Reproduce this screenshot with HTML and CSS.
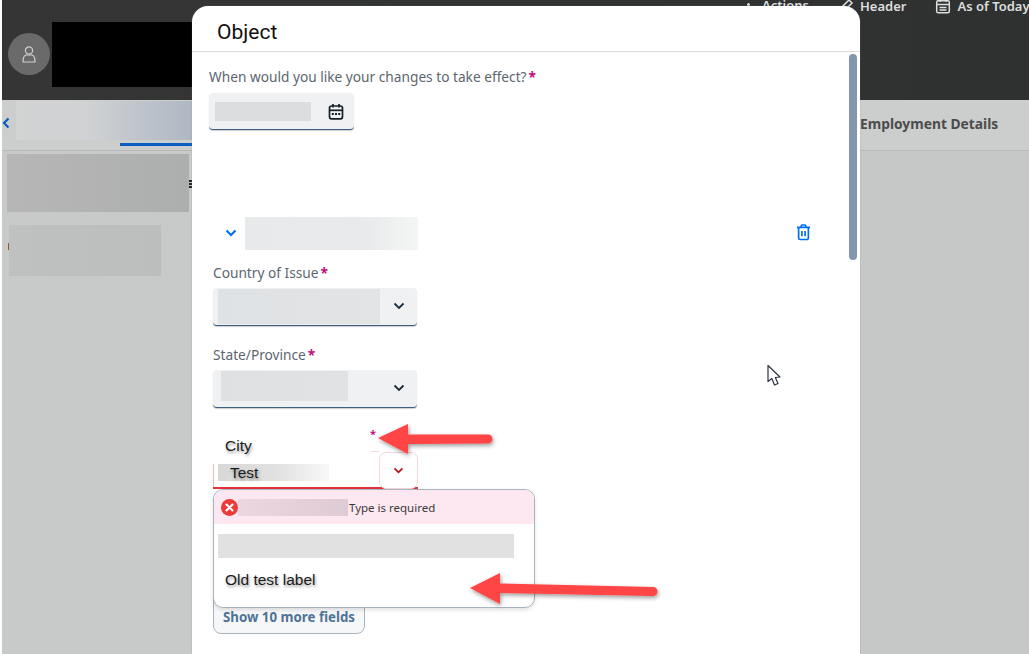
FILE: index.html
```html
<!DOCTYPE html>
<html lang="en">
<head>
<meta charset="utf-8">
<title>Object</title>
<link rel="stylesheet" href="styles.css">
</head>
<body>
<div class="page">
  <header class="shell">
    <div class="shell-actions">
      <span class="shell-action action-first"><span class="dot"></span>Actions</span>
      <span class="shell-action">
        <svg class="ico" viewBox="0 0 16 16"><path d="M2 14l1-4 8-8 3 3-8 8z" fill="none" stroke="currentColor" stroke-width="1.5"/></svg>Header</span>
      <span class="shell-action">
        <svg class="ico" viewBox="0 0 16 16"><rect x="1.7" y="2.7" width="12.6" height="12" rx="1.5" fill="none" stroke="currentColor" stroke-width="1.5"/><path d="M1.7 6.5h12.6M5 1v3M11 1v3M4.5 9.500h7M4.500 12h7" stroke="currentColor" stroke-width="1.500" fill="none"/></svg>As of Today</span>
    </div>
    <div class="identity">
      <div class="avatar">
        <svg viewBox="0 0 16 18" class="avatar-ico"><circle cx="8" cy="5" r="3.600" fill="none" stroke="currentColor" stroke-width="1.200"/><path d="M2 16.500c0-5 1.500-7 3.500-7h5c2 0 3.500 2 3.500 7z" fill="none" stroke="currentColor" stroke-width="1.200" stroke-linejoin="round"/></svg>
      </div>
      <div class="redacted"></div>
    </div>
  </header>
  <nav class="tabs">
    <span class="back">
      <svg viewBox="0 0 8 12" class="back-ico"><path d="M6.500 1.500L2 6l4.500 4.500" fill="none" stroke="currentColor" stroke-width="2.200"/></svg>
    </span>
    <span class="tab-blur"></span>
    <span class="tab-active"></span>
    <span class="tab-label">Employment Details</span>
  </nav>
  <main class="content">
    <div class="side-a"></div>
    <div class="side-b"></div>
  </main>
  <span class="menu-dots"></span>
  <span class="orange-mark"></span>

  <section class="dialog">
    <h1 class="dialog-title">Object</h1>
    <div class="dialog-body">
      <div class="thumb"></div>
      <div class="date-block">
        <div class="label">When would you like your changes to take effect?<span class="req">*</span></div>
        <div class="input date-input">
          <span class="blur date-blur"></span>
          <svg class="cal" viewBox="0 0 16 17"><rect x="1.500" y="3" width="13" height="12.800" rx="2" fill="none" stroke="#16202b" stroke-width="1.700"/><path d="M1.500 7.300h13" stroke="#16202b" stroke-width="1.700"/><path d="M5 1v3.500M11 1v3.500" stroke="#16202b" stroke-width="1.700"/><path d="M3.800 11h2M7 11h2M10.200 11h2" stroke="#16202b" stroke-width="1.800"/></svg>
        </div>
      </div>
      <div class="section-row">
        <svg class="chev-blue" viewBox="0 0 12 8"><path d="M1.500 1.500L6 6l4.500-4.500" fill="none" stroke="currentColor" stroke-width="2.200"/></svg>
        <span class="blur section-blur"></span>
        <svg class="trash" viewBox="0 0 16 18"><path d="M1 4h14M5.500 4V2.500a1 1 0 0 1 1-1h3a1 1 0 0 1 1 1V4M2.800 4v11.500a1.500 1.500 0 0 0 1.500 1.500h7.400a1.500 1.500 0 0 0 1.500-1.500V4M6.300 8v5.500M9.700 8v5.500" fill="none" stroke="currentColor" stroke-width="1.800"/></svg>
      </div>
      <div class="field">
        <div class="label">Country of Issue<span class="req">*</span></div>
        <div class="input select country">
          <span class="blur country-blur"></span>
          <svg class="chev" viewBox="0 0 12 8"><path d="M1.500 1.500L6 6l4.500-4.500" fill="none" stroke="currentColor" stroke-width="1.800"/></svg>
        </div>
      </div>
      <div class="field state-field">
        <div class="label">State/Province<span class="req">*</span></div>
        <div class="input select state">
          <span class="blur state-blur"></span>
          <svg class="chev" viewBox="0 0 12 8"><path d="M1.500 1.500L6 6l4.500-4.500" fill="none" stroke="currentColor" stroke-width="1.800"/></svg>
        </div>
      </div>
      <div class="city-field">
        <div class="city-head"><span class="city-label">City</span><span class="req city-star">*</span></div>
        <div class="city-input">
          <span class="test-blur"><span class="test-text">Test</span></span>
          <span class="city-btn">
            <svg class="chev-red" viewBox="0 0 12 8"><path d="M1.500 1.500L6 6l4.500-4.500" fill="none" stroke="currentColor" stroke-width="2"/></svg>
          </span>
        </div>
      </div>
      <button class="more-btn">Show 10 more fields</button>
      <div class="popover">
        <div class="pop-error">
          <svg class="err" viewBox="0 0 18 18"><circle cx="9" cy="9" r="9" fill="#ee3939"/><path d="M5.800 5.800l6.400 6.400M12.200 5.800l-6.400 6.400" stroke="#fff" stroke-width="2.200" stroke-linecap="round"/></svg>
          <span class="err-blur"></span>
          <span class="err-text">Type is required</span>
        </div>
        <div class="pop-list">
          <span class="pop-blur"></span>
          <span class="pop-item">Old test label</span>
        </div>
      </div>
    </div>
  </section>

  <svg class="arrows" viewBox="0 0 1029 654">
    <defs><filter id="sh" x="-20%" y="-40%" width="140%" height="200%"><feDropShadow dx="1" dy="2" stdDeviation="2" flood-color="#000" flood-opacity=".4"/></filter></defs>
    <path filter="url(#sh)" fill="#ff4444" d="M378 438L408 424V434.500L488 434.500A4.500 4.500 0 0 1 488 443.500L408 444V454Z"/>
    <path filter="url(#sh)" fill="#ff4444" d="M470 588L500 573V583.500L653 587A4.500 4.500 0 0 1 653 596L500 593V604Z"/>
    <path fill="#fff" stroke="#2a3442" stroke-width="1.200" stroke-linejoin="round" d="M768 365.500V381.500L771.800 378.500L774.500 385L778 383.500L775.300 377.500L780 377Z"/>
  </svg>
</div>
</body>
</html>
```
FILE: styles.css
```css
* { box-sizing: border-box; }
html, body { margin: 0; padding: 0; }
body { background: #fff; font-family: "Noto Sans", "Open Sans", sans-serif; }
.page { position: relative; width: 1029px; height: 654px; overflow: hidden; padding-left: 2px; background: #fff; }

.shell { height: 100px; background: linear-gradient(90deg, #353535, #2f3131); position: relative; }
.shell-actions { position: absolute; left: 745px; width: 282px; top: -4px; display: flex; gap: 29px; color: #dcdedf; font: 600 13px/20px "Noto Sans", sans-serif; white-space: nowrap; overflow: hidden; }
.shell-action { display: inline-flex; align-items: center; gap: 6px; }
.action-first { gap: 0; margin-top: -3px; }
.dot { width: 3px; height: 3px; border-radius: 50%; background: #dcdedf; margin: 0 12px 0 0; }
.ico { width: 16px; height: 16px; flex: none; }
.identity { display: flex; padding: 22px 0 0 6px; }
.avatar { width: 42px; height: 42px; border-radius: 50%; background: #6a6a6a; margin: 11px 0 0 0; display: flex; align-items: center; justify-content: center; color: #cfcfcf; }
.avatar-ico { width: 16px; height: 19px; }
.redacted { width: 160px; height: 65px; background: #000; margin-left: 2px; }

.tabs { height: 51px; background: #cccdcd; border-bottom: 1px solid #b9b9b9; position: relative; }
.back { position: absolute; left: 0; top: 17px; color: #0a5dc2; }
.back-ico { width: 8px; height: 12px; display: block; }
.tab-blur { position: absolute; left: 14px; top: 1px; width: 176px; height: 39px; background: linear-gradient(90deg, #d2d3d3, #d0d2d4 40%, #aeb7c3); }
.tab-active { position: absolute; left: 118px; top: 43px; width: 72px; height: 3px; background: #0a5dc2; }
.tab-label { position: absolute; left: 858px; top: 14px; font: 700 13.800px/20px "Noto Sans", sans-serif; color: #4c4c4c; white-space: nowrap; }

.content { height: 504px; background: linear-gradient(90deg, #c8c9c9 0, #c6c7c7 100%); padding: 3px 0 0 5px; }
.side-a { width: 182px; height: 58px; background: linear-gradient(90deg, #b5b6b5, #adaeae); }
.side-b { width: 152px; height: 51px; margin: 13px 0 0 2px; background: linear-gradient(90deg, #bfc1c1, #bcbebe); }
.menu-dots { position: absolute; left: 189px; top: 180px; width: 3px; height: 9px; background: repeating-linear-gradient(180deg, #222 0 2px, transparent 2px 3px); }
.orange-mark { position: absolute; left: 8px; top: 243px; width: 1px; height: 7px; background: #a2521e; }

.dialog { position: absolute; left: 192px; top: 6px; width: 668px; height: 660px; background: #fff; border-radius: 16px 16px 0 0; box-shadow: 0 0 1px #76879a; }
.dialog-title { margin: 0; height: 46px; padding: 12px 0 0 25px; font: 400 21px/28px Roboto, sans-serif; color: #111; border-bottom: 1px solid #dcdcdc; }
.dialog-body { position: relative; padding: 0 0 0 17px; }
.thumb { position: absolute; right: 3px; top: 2px; width: 8px; height: 206px; border-radius: 4px; background: #8296ad; }

.label { font: 400 13.700px/18px "Noto Sans", sans-serif; color: #5c6670; }
.req { color: #c0107c; font-weight: 700; margin-left: 2px; }
.blur { display: block; }
.input { background: #eff1f2; border-radius: 4px; border-bottom: 1px solid #3f5f80; box-shadow: 0 1px 1px #c9ced3; position: relative; }
.date-block { padding-top: 16px; }
.date-input { margin-top: 7px; width: 145px; height: 37px; display: flex; align-items: center; padding: 0 10px 0 6px; justify-content: space-between; }
.date-blur { width: 96px; height: 19px; background: #dcddde; }
.cal { width: 16px; height: 17px; }

.section-row { margin-top: 87px; height: 33px; display: flex; align-items: center; padding-left: 16px; }
.chev-blue { width: 12px; height: 8px; color: #0070f2; margin-top: -2px; }
.section-blur { width: 173px; height: 33px; margin-left: 8px; background: linear-gradient(90deg, #e8e9ea, #e9eaeb 70%, #f4f5f5); }
.trash { width: 15px; height: 18px; margin: -3px 0 0 378px; color: #0070f2; }

.field { margin: 14px 0 0 4px; width: 204px; }
.state-field { margin-top: 20px; }
.select { margin-top: 6px; height: 38px; display: flex; align-items: center; padding-left: 5px; }
.country-blur { width: 162px; height: 35px; background: linear-gradient(90deg, #dfe2e4, #e2e4e6); }
.state-blur { width: 127px; height: 30px; margin: -6px 0 0 3px; background: linear-gradient(90deg, #dfe0e1, #e1e2e3); }
.chev { position: absolute; right: 12px; top: 14px; width: 12px; height: 8px; color: #1d2d3e; }

.city-field { margin: 16px 0 0 4px; width: 205px; }
.city-head { height: 28px; display: flex; align-items: flex-start; position: relative; width: 166px; background: linear-gradient(#f6d7d7, #f6d7d7) no-repeat right bottom / 8px 1px; }
.city-label { font: 400 15.500px/20px "Liberation Sans", sans-serif; color: #1a1a1a; margin: 12px 0 0 12px; text-shadow: 1px 2px 3px rgba(0,0,0,.4); }
.city-star { position: absolute; left: 157px; top: 2px; font-size: 11px; margin: 0; }
.city-input { height: 37px; display: flex; justify-content: space-between; border-bottom: 2px solid #e5333a; background: linear-gradient(#f2b9b9, #f2b9b9) no-repeat 0 12px / 1px 25px; padding-left: 5px; }
.test-blur { width: 111px; height: 17px; margin-top: 12px; background: linear-gradient(90deg, #d8d8d8, #e0e0e0 50%, #f8f8f8); }
.test-text { display: block; font: 400 15.500px/17px "Liberation Sans", sans-serif; color: #1a1a1a; padding-left: 12px; text-shadow: 1px 2px 3px rgba(0,0,0,.4); }
.city-btn { width: 39px; height: 37px; border: 1px solid #f4d6d6; border-radius: 7px; display: flex; align-items: center; justify-content: center; background: #fff; }
.chev-red { width: 11px; height: 7px; color: #b3141c; }

.more-btn { display: block; margin: 77px 0 0 4px; width: 152px; height: 68px; padding: 33px 0 0 0; background: #f6f7f8; border: 1px solid #a9b4be; border-radius: 8px; color: #4f7396; font: 700 13.300px/20px "Noto Sans", sans-serif; }

.popover { position: absolute; left: 21px; top: 437px; width: 322px; height: 119px; background: #fff; border: 1px solid #aab4c0; border-radius: 10px; box-shadow: 0 2px 4px rgba(0,0,0,.12); overflow: hidden; }
.pop-error { height: 34px; background: #fde7f0; display: flex; align-items: center; padding-left: 7px; }
.err { width: 17px; height: 17px; flex: none; }
.err-blur { width: 110px; height: 17px; background: linear-gradient(90deg, #ecd6e0, #dfcbd3); }
.err-text { margin: 1px 0 0 1px; font: 400 11.500px/16px "Noto Sans", sans-serif; color: #3a3a3a; }
.pop-list { padding: 10px 0 0 4px; }
.pop-blur { display: block; width: 296px; height: 24px; background: #e1e1e1; }
.pop-item { display: block; margin: 12px 0 0 7px; font: 400 15.500px/20px "Liberation Sans", sans-serif; color: #1a1a1a; text-shadow: 1px 2px 3px rgba(0,0,0,.4); }

.arrows { position: absolute; left: 0; top: 0; width: 1029px; height: 654px; pointer-events: none; }
```
